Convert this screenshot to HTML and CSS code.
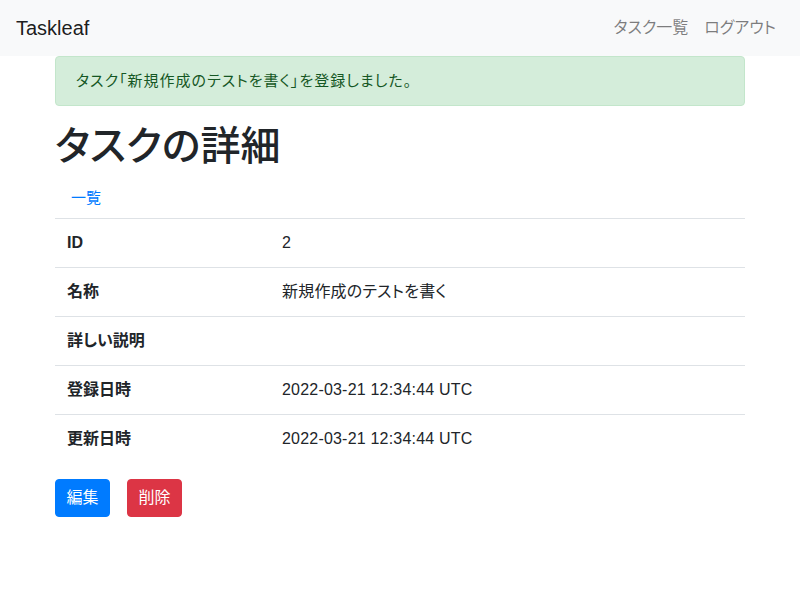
FILE: index.html
```html
<!DOCTYPE html>
<html lang="ja">
<head>
<meta charset="utf-8">
<title>Taskleaf</title>
<link rel="stylesheet" href="styles.css">
</head>
<body>
<nav class="navbar">
  <a class="brand" href="#">Taskleaf</a>
  <ul class="nav-links">
    <li><a href="#">タスク一覧</a></li>
    <li><a href="#">ログアウト</a></li>
  </ul>
</nav>
<main class="container">
  <div class="alert">タスク「新規作成のテストを書く」を登録しました。</div>
  <h1 class="title">タスクの詳細</h1>
  <div class="sub-nav"><a class="sub-link" href="#">一覧</a></div>
  <div class="detail-table">
    <div class="row"><div class="th">ID</div><div class="td">2</div></div>
    <div class="row"><div class="th">名称</div><div class="td">新規作成のテストを書く</div></div>
    <div class="row"><div class="th">詳しい説明</div><div class="td"></div></div>
    <div class="row"><div class="th">登録日時</div><div class="td">2022-03-21 12:34:44 UTC</div></div>
    <div class="row"><div class="th">更新日時</div><div class="td">2022-03-21 12:34:44 UTC</div></div>
  </div>
  <div class="actions">
    <a class="btn btn-primary" href="#">編集</a>
    <a class="btn btn-danger" href="#">削除</a>
  </div>
</main>
</body>
</html>
```
FILE: styles.css
```css
* { box-sizing: border-box; }
html, body { margin: 0; padding: 0; }
body {
  font-family: "Liberation Sans", "Noto Sans CJK JP", sans-serif;
  font-feature-settings: "palt";
  font-size: 16px;
  line-height: 1.5;
  color: #212529;
  background: #fff;
}
a { text-decoration: none; }
.navbar {
  display: flex;
  align-items: center;
  justify-content: space-between;
  background: #f8f9fa;
  padding: 8px 16px;
  height: 56px;
}
.brand {
  font-size: 20px;
  line-height: 30px;
  padding: 5px 0;
  color: rgba(0,0,0,.9);
}
.nav-links {
  display: flex;
  list-style: none;
  margin: 0;
  padding: 0;
}
.nav-links a {
  display: block;
  padding: 8px;
  color: rgba(0,0,0,.5);
}
.container {
  width: 690px;
  margin: 0 auto;
}
.alert {
  background: #d4edda;
  border: 1px solid #c3e6cb;
  color: #155724;
  border-radius: 4px;
  padding: 12px 20px;
  font-size: 15px;
  line-height: 24px;
  letter-spacing: 1px;
  margin-bottom: 16px;
}
.title {
  font-size: 40px;
  font-weight: 500;
  line-height: 48px;
  margin: 0 0 8px;
}
.sub-nav { display: flex; }
.sub-link {
  display: block;
  padding: 8px 16px;
  font-size: 15px;
  line-height: 24px;
  color: #007bff;
}
.detail-table { margin-bottom: 16px; }
.row {
  display: grid;
  grid-template-columns: 215px 1fr;
  border-top: 1px solid #dee2e6;
}
.th, .td {
  padding: 12px;
  line-height: 24px;
  min-height: 48px;
}
.th { font-weight: bold; }
.td { letter-spacing: 0.2px; }
.actions {
  display: flex;
  gap: 17px;
}
.btn {
  display: inline-block;
  color: #fff;
  line-height: 24px;
  padding: 6px 0;
  border-radius: 4px;
  border: 1px solid transparent;
  width: 55px;
  text-align: center;
}
.btn-primary { background: #007bff; border-color: #007bff; }
.btn-danger { background: #dc3545; border-color: #dc3545; }
```
